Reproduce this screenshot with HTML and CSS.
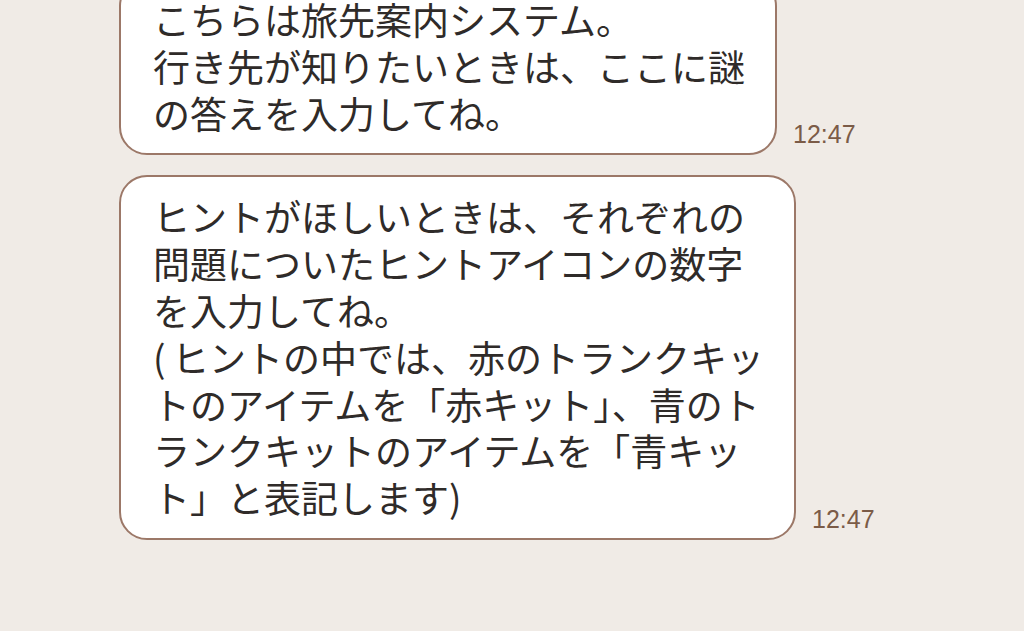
FILE: index.html
```html
<!DOCTYPE html>
<html lang="ja">
<head>
    <meta charset="UTF-8">
    <meta name="viewport" content="width=device-width, initial-scale=1.0">
    <title>トーク</title>
    <link rel="stylesheet" href="styles.css">
</head>
<body>
    <div class="talk">
        <div class="row first">
            <div class="bubble">こちらは旅先案内システム。<br>行き先が知りたいときは、ここに謎<br>の答えを入力してね。</div>
            <span class="time">12:47</span>
        </div>
        <div class="row">
            <div class="bubble">ヒントがほしいときは、それぞれの<br>問題についたヒントアイコンの数字<br>を入力してね。<br><span class="paren">(</span>ヒントの中では、赤のトランクキッ<br>トのアイテムを「赤キット」、青のト<br>ランクキットのアイテムを「青キッ<br>ト」と表記します<span class="paren">)</span></div>
            <span class="time">12:47</span>
        </div>
    </div>
</body>
</html>
```

FILE: styles.css
```css
* {
    margin: 0;
    padding: 0;
    box-sizing: border-box;
}
html, body {
    height: 100%;
    overflow: hidden;
}
body {
    background-color: #f0ebe6;
    font-family: "Noto Sans CJK JP", "Noto Sans", sans-serif;
}
.talk {
    padding-left: 119px;
    display: flex;
    flex-direction: column;
    gap: 20px;
}
.row {
    display: flex;
    align-items: flex-end;
}
.row.first {
    margin-top: -22px;
}
.bubble {
    background-color: #fff;
    border: 2px solid #9c7868;
    border-radius: 28px;
    padding: 16px 30px 17px 32px;
    font-size: 37px;
    line-height: 46.8px;
    color: #2f2b29;
    white-space: nowrap;
}
.paren {
    display: inline-block;
    width: 19px;
}
.time {
    margin-left: 16px;
    margin-bottom: 8px;
    font-family: "Liberation Sans", Arial, sans-serif;
    font-size: 25px;
    line-height: 25px;
    color: #7b5b47;
}
```
